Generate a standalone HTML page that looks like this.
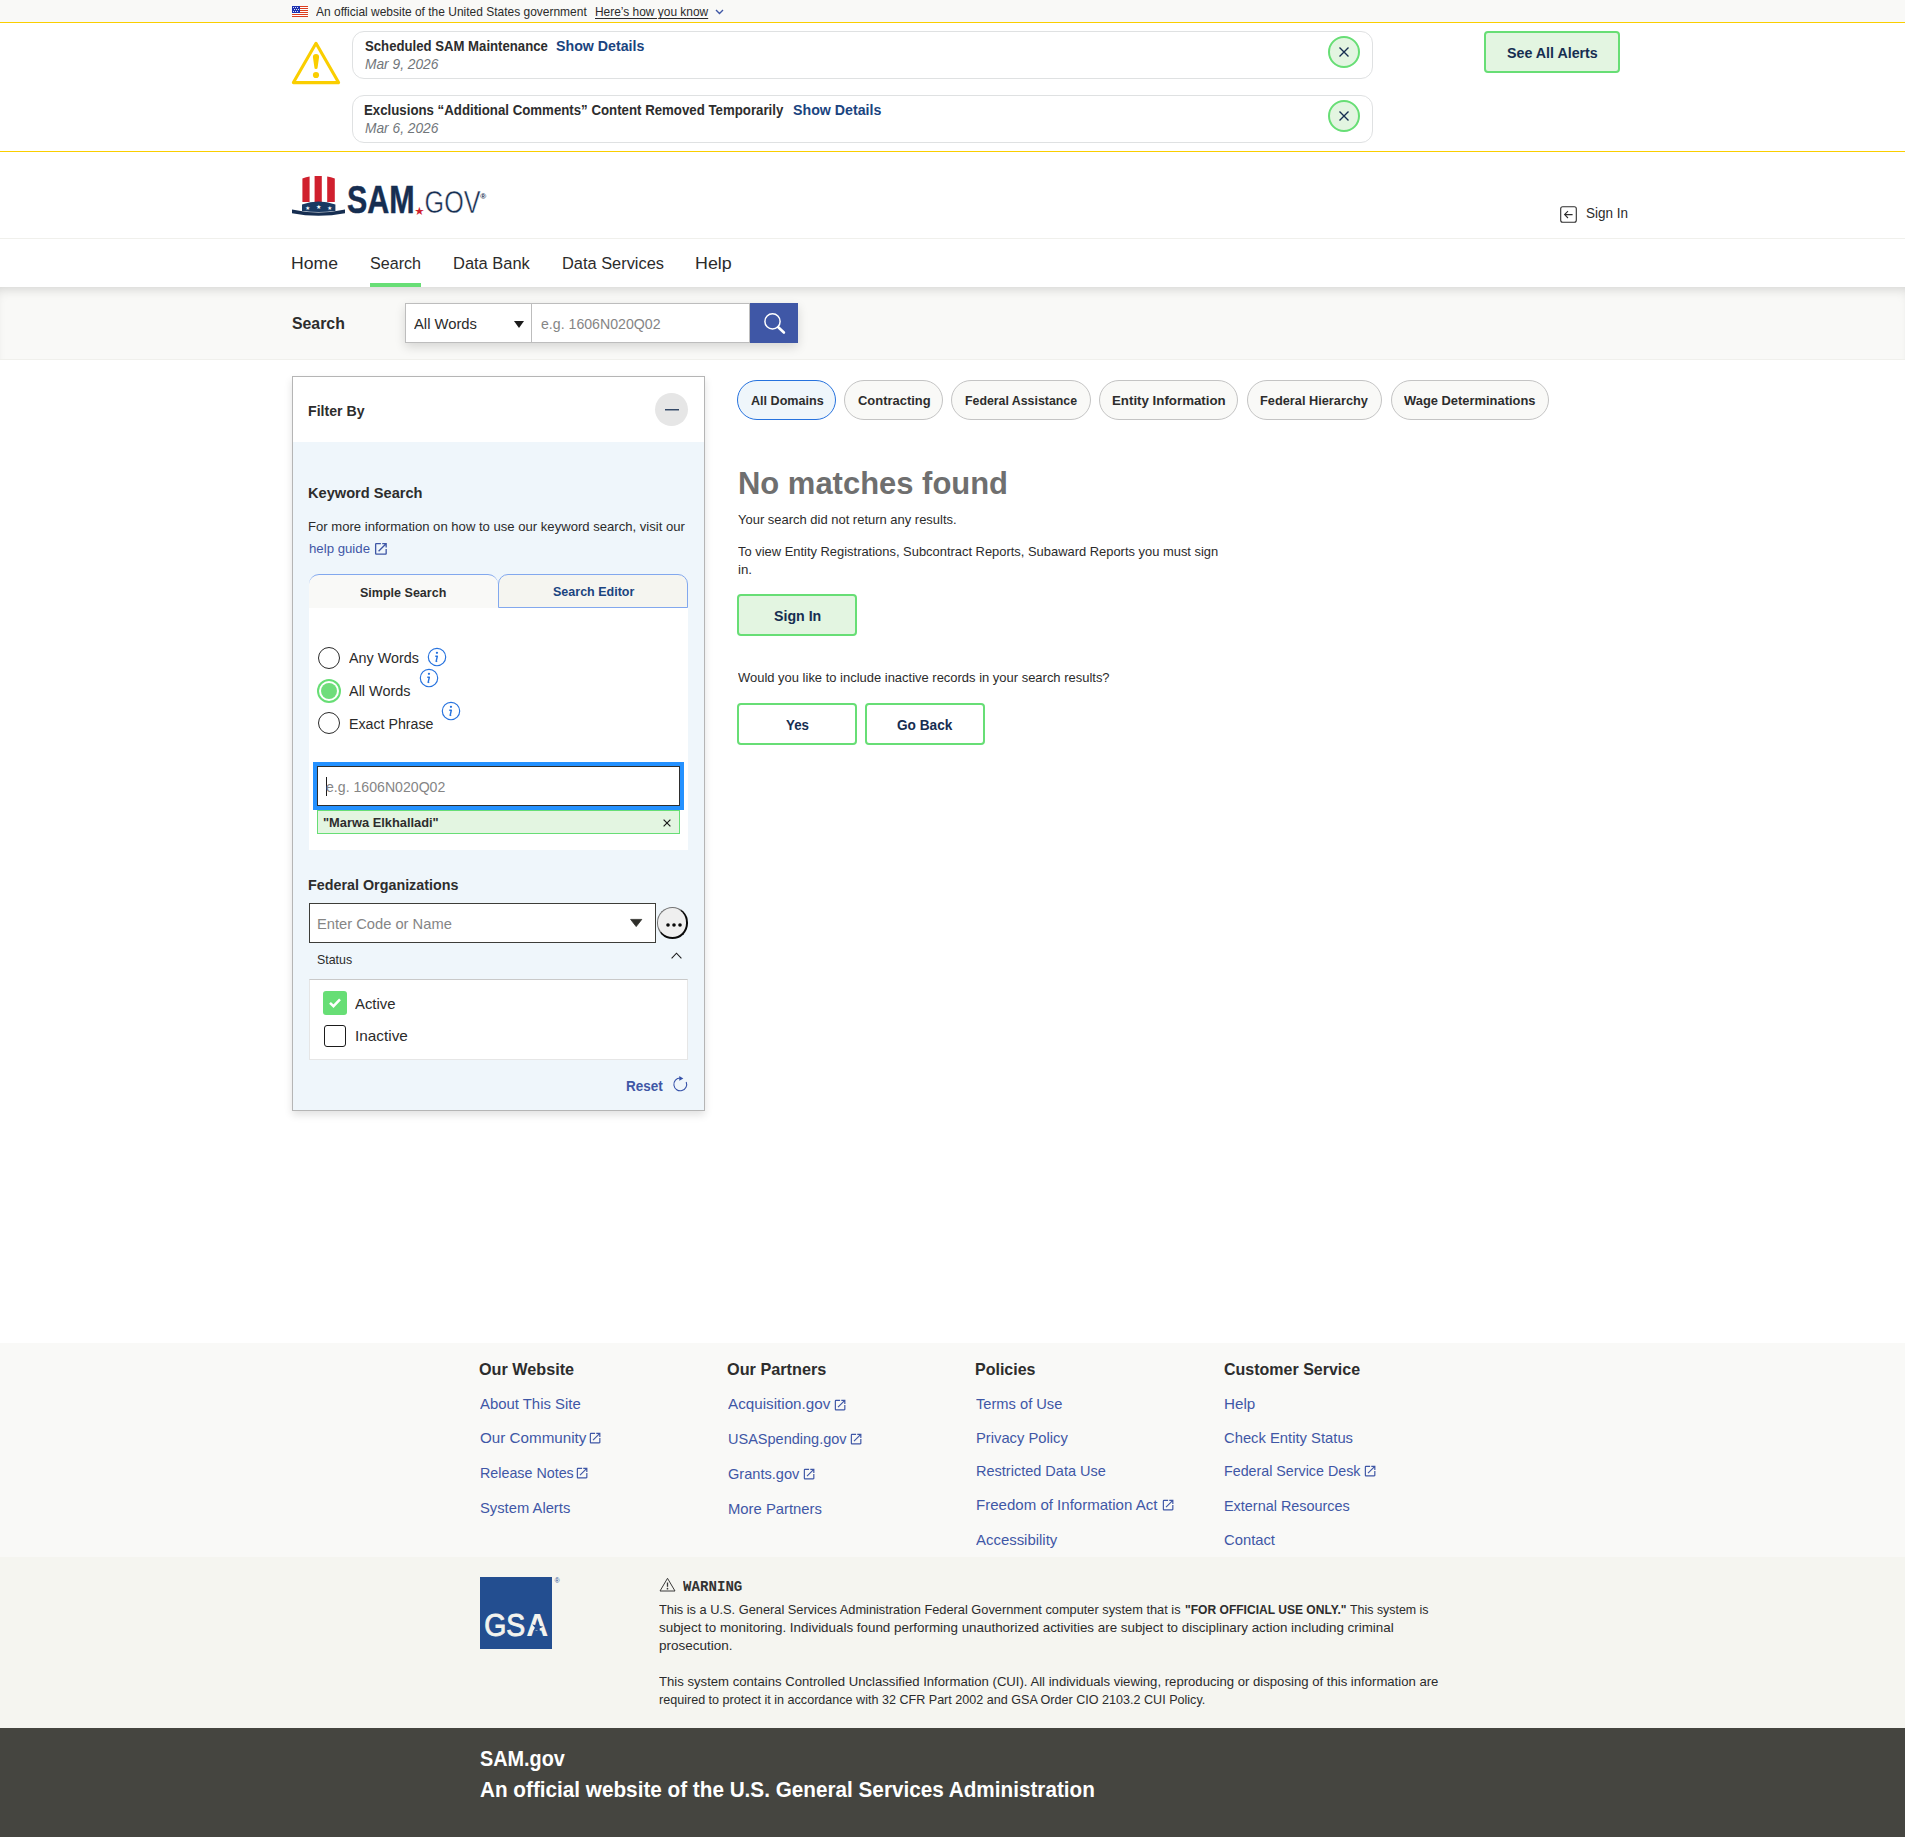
<!DOCTYPE html>
<html lang="en">
<head>
<meta charset="utf-8">
<title>SAM.gov | Search</title>
<style>

*{box-sizing:border-box;margin:0;padding:0}
html,body{width:1905px;height:1837px;overflow:hidden;background:#fff}
body{position:relative;font-family:"Liberation Sans",Arial,sans-serif;color:#2b2b2b}
section,header,nav,main,aside,footer,form{position:absolute;left:0;top:0;width:1905px;height:0;display:block}
.t{position:absolute;transform-origin:0 0;white-space:pre;line-height:1;font-weight:400;text-decoration:none;color:#2b2b2b;font-style:normal;display:block}
.b{position:absolute;display:block}
svg{position:absolute;display:block;overflow:visible}
.bd{font-weight:700;color:#2d2d2d}
.it{font-style:italic}
.lk{color:#3f57a6}
.nv{color:#1a4480}
.dk{color:#162e51}
.gy{color:#71767a}
.ph{color:#858585}
.wh{color:#fff}
.un{text-decoration:underline;text-decoration-thickness:1px;text-underline-offset:2px}
.mono{font-family:"Liberation Mono","DejaVu Sans Mono",monospace}
.gbtn{border:2px solid #67de75;border-radius:4px;background:#e3f5e1}
.gbtn.w{background:#fff}
.alert{border:1px solid #dfe1e2;border-radius:12px;background:#fff}
.xc{border:2px solid #67de75;border-radius:50%;background:#e3f5e1}
.pill{border:1px solid #c4c4c4;border-radius:20px;background:#f9f9f7}
.pill.on{border-color:#2672de;background:#eff6fb}

</style>
</head>
<body>
<section class="banner">
<div class="b" style="left:0.0px;top:0.0px;width:1905.0px;height:22.0px;background:#f9f9f7"></div>
<div class="b" style="left:0.0px;top:22.0px;width:1905.0px;height:1.0px;background:#face00"></div>
<svg style="left:292px;top:6px" width="16" height="11" viewBox="0 0 16 11" shape-rendering="crispEdges"><rect width="16" height="11" fill="#fff"/><rect x="0" y="0" width="16" height="1" fill="#db3e1f"/><rect x="0" y="2" width="16" height="1" fill="#db3e1f"/><rect x="0" y="4" width="16" height="1" fill="#db3e1f"/><rect x="0" y="6" width="16" height="1" fill="#db3e1f"/><rect x="0" y="8" width="16" height="1" fill="#db3e1f"/><rect x="0" y="10" width="16" height="1" fill="#db3e1f"/><rect width="8" height="7" fill="#1e33b1"/><rect x="1.0" y="1.0" width="1" height="1" fill="#fff" opacity=".85"/><rect x="3.0" y="1.0" width="1" height="1" fill="#fff" opacity=".85"/><rect x="5.0" y="1.0" width="1" height="1" fill="#fff" opacity=".85"/><rect x="2.0" y="3.0" width="1" height="1" fill="#fff" opacity=".85"/><rect x="4.0" y="3.0" width="1" height="1" fill="#fff" opacity=".85"/><rect x="6.0" y="3.0" width="1" height="1" fill="#fff" opacity=".85"/><rect x="1.0" y="5.0" width="1" height="1" fill="#fff" opacity=".85"/><rect x="3.0" y="5.0" width="1" height="1" fill="#fff" opacity=".85"/><rect x="5.0" y="5.0" width="1" height="1" fill="#fff" opacity=".85"/></svg>
<span id="t1" class="t" style="left:316.00px;top:6.00px;font-size:12.20px;transform:scaleX(0.9826)">An official website of the United States government</span>
<a id="t2" class="t un" style="left:594.62px;top:6.00px;font-size:12.20px;transform:scaleX(0.9790)">Here’s how you know</a>
<svg style="left:715px;top:9px" width="9" height="6" viewBox="0 0 9 6"><path d="M1 1l3.5 3.5L8 1" fill="none" stroke="#3f57a6" stroke-width="1.4"/></svg>
</section>
<section class="alerts">
<div class="b" style="left:0.0px;top:151.0px;width:1905.0px;height:1.0px;background:#face00"></div>
<svg style="left:290px;top:40px" width="52" height="46" viewBox="290 40 52 46"><path d="M316 43.3L338.600 82.600H293.400Z" fill="none" stroke="#face00" stroke-width="3.100" stroke-linejoin="round"/><path d="M312.900 57a3.100 3.100 0 0 1 6.200 0L317.600 67.400a1.600 1.600 0 0 1-3.200 0Z" fill="#face00"/><circle cx="316" cy="75" r="3.100" fill="#face00"/></svg>
<div class="b alert" style="left:352.0px;top:31.0px;width:1021.0px;height:47.5px;"></div>
<span id="t3" class="t bd" style="left:365.00px;top:38.00px;font-size:15.00px;transform:scaleX(0.8773)">Scheduled SAM Maintenance</span>
<a id="t4" class="t bd nv" style="left:556.30px;top:38.00px;font-size:15.00px;transform:scaleX(0.9461)">Show Details</a>
<span id="t5" class="t it gy" style="left:365.00px;top:56.00px;font-size:15.00px;transform:scaleX(0.9169)">Mar 9, 2026</span>
<div class="b xc" style="left:1328.0px;top:36.0px;width:32.0px;height:32.0px;"><svg style="left:9px;top:9px" width="10" height="10" viewBox="0 0 10 10"><path d="M0.5 0.5l9 9M9.5 0.5l-9 9" stroke="#162e51" stroke-width="1.4" fill="none"/></svg></div>
<div class="b alert" style="left:352.0px;top:95.0px;width:1021.0px;height:47.5px;"></div>
<span id="t6" class="t bd" style="left:364.12px;top:102.00px;font-size:15.00px;transform:scaleX(0.8831)">Exclusions “Additional Comments” Content Removed Temporarily</span>
<a id="t7" class="t bd nv" style="left:792.60px;top:102.00px;font-size:15.00px;transform:scaleX(0.9461)">Show Details</a>
<span id="t8" class="t it gy" style="left:365.00px;top:120.00px;font-size:15.00px;transform:scaleX(0.9169)">Mar 6, 2026</span>
<div class="b xc" style="left:1328.0px;top:100.0px;width:32.0px;height:32.0px;"><svg style="left:9px;top:9px" width="10" height="10" viewBox="0 0 10 10"><path d="M0.5 0.5l9 9M9.5 0.5l-9 9" stroke="#162e51" stroke-width="1.4" fill="none"/></svg></div>
<div class="b gbtn" style="left:1484.0px;top:31.0px;width:136.0px;height:41.5px;"></div>
<a id="t9" class="t bd dk" style="left:1506.50px;top:45.00px;font-size:15.00px;transform:scaleX(0.9495)">See All Alerts</a>
</section>
<header>
<svg style="left:290px;top:174px" width="200" height="44" viewBox="290 174 200 44">
<path d="M302.4 178.6Q306 177.2 309.6 176.6V202H302.4Z" fill="#d0202e"/>
<path d="M314.6 176.1Q318.2 175.7 321.8 176.1V202H314.6Z" fill="#d0202e"/>
<path d="M327.2 176.6Q331 177.2 334.8 178.6V202H327.2Z" fill="#d0202e"/>
<path d="M302 211V204.4Q318.5 198.6 335.4 204.4V211Q318.5 213 302 211Z" fill="#1a3a63"/>
<path d="M292 209.400Q318.500 215.400 345 209.400V213.200Q318.500 218.300 292 213.200Z" fill="#162e51"/>
<text x="307.6" y="209.6" font-size="5.5" fill="#fff" text-anchor="middle" font-family="DejaVu Sans, sans-serif">★</text>
<text x="318.6" y="209.4" font-size="6" fill="#fff" text-anchor="middle" font-family="DejaVu Sans, sans-serif">★</text>
<text x="329.6" y="209.6" font-size="5.5" fill="#fff" text-anchor="middle" font-family="DejaVu Sans, sans-serif">★</text>
<text x="346.900" y="212.500" font-size="39.100" font-weight="700" fill="#162e51" stroke="#162e51" stroke-width="0.500" textLength="67.600" lengthAdjust="spacingAndGlyphs" font-family="Liberation Sans, sans-serif">SAM</text>
<text x="419.500" y="214.900" font-size="11.500" fill="#d0202e" text-anchor="middle" font-family="DejaVu Sans, sans-serif">★</text>
<text x="424.600" y="212.700" font-size="31.400" fill="#162e51" stroke="#fff" stroke-width="0.500" textLength="55.900" lengthAdjust="spacingAndGlyphs" font-family="Liberation Sans, sans-serif">GOV</text>
<text x="480.300" y="199.300" font-size="8" font-weight="700" fill="#162e51" font-family="Liberation Sans, sans-serif">®</text>
</svg>

<svg style="left:1560px;top:206px" width="17" height="17" viewBox="0 0 17 17"><rect x="0.700" y="0.700" width="15.600" height="15.600" rx="2" fill="none" stroke="#2e2e2e" stroke-width="1.100"/><path d="M12.600 8.600H4.800M8 5.200L4.600 8.600L8 12" fill="none" stroke="#2e2e2e" stroke-width="1.100"/></svg>
<a id="t10" class="t" style="left:1586.00px;top:205.00px;font-size:15.30px;transform:scaleX(0.8808)">Sign In</a>
<div class="b" style="left:0.0px;top:238.0px;width:1905.0px;height:1.0px;background:#f0f0ec"></div>
</header>
<nav>
<a id="t11" class="t" style="left:290.96px;top:256.00px;font-size:16.90px;transform:scaleX(1.0421)">Home</a>
<a id="t12" class="t" style="left:370.00px;top:256.00px;font-size:16.90px;transform:scaleX(0.9544)">Search</a>
<a id="t13" class="t" style="left:452.83px;top:256.00px;font-size:16.90px;transform:scaleX(0.9742)">Data Bank</a>
<a id="t14" class="t" style="left:561.83px;top:256.00px;font-size:16.90px;transform:scaleX(0.9702)">Data Services</a>
<a id="t15" class="t" style="left:694.74px;top:256.00px;font-size:16.90px;transform:scaleX(1.0557)">Help</a>
<div class="b" style="left:370.0px;top:283.0px;width:51.0px;height:4.0px;background:#67de75"></div>
</nav>
<form class="searchbar">
<div class="b" style="left:0.0px;top:287.0px;width:1905.0px;height:73.0px;background:#f9f9f7;box-shadow:inset 0 8px 12px -6px rgba(0,0,0,.16);border-bottom:1px solid #f0f0ec"></div>
<label id="t16" class="t bd" style="left:292.00px;top:316.00px;font-size:16.90px;transform:scaleX(0.9372)">Search</label>
<div class="b" style="left:405.0px;top:303.0px;width:393.0px;height:40.0px;box-shadow:0 4px 10px rgba(0,0,0,.14)"></div>
<div class="b" style="left:405.0px;top:303.0px;width:127.0px;height:40.0px;background:#fff;border:1px solid #bdbdbd"></div>
<span id="t17" class="t" style="left:414.00px;top:316.00px;font-size:15.00px;transform:scaleX(0.9857)">All Words</span>
<svg style="left:514px;top:321px" width="10" height="7" viewBox="0 0 10 7"><path d="M0 0h10L5 7z" fill="#1b1b1b"/></svg>
<div class="b" style="left:531.0px;top:303.0px;width:219.0px;height:40.0px;background:#fff;border:1px solid #bdbdbd"></div>
<span id="t18" class="t ph" style="left:540.50px;top:316.00px;font-size:15.00px;transform:scaleX(0.9428)">e.g. 1606N020Q02</span>
<div class="b" style="left:750.0px;top:303.0px;width:48.0px;height:40.0px;background:#3f57a6"><svg style="left:12px;top:8px" width="24" height="24" viewBox="0 0 24 24"><circle cx="10.5" cy="10.4" r="7.6" fill="none" stroke="#fff" stroke-width="1.5"/><path d="M16.3 16.3l5.6 5.2" stroke="#fff" stroke-width="2.6" stroke-linecap="round"/></svg></div>
</form>
<main>
<aside>
<div class="b" style="left:292.0px;top:376.0px;width:413.0px;height:735.0px;background:#eff6fb;border:1px solid #b5b5b5;box-shadow:0 4px 8px rgba(0,0,0,.12)"></div>
<div class="b" style="left:293.0px;top:377.0px;width:411.0px;height:65.0px;background:#fff"></div>
<h2 id="t19" class="t bd" style="left:308.36px;top:403.00px;font-size:15.00px;transform:scaleX(0.9418)">Filter By</h2>
<div class="b" style="left:655.0px;top:393.0px;width:33.0px;height:33.0px;background:#e6e6e6;border-radius:50%"><svg style="left:9.5px;top:15.5px" width="14" height="2" viewBox="0 0 14 2"><rect y="0.150" width="14" height="1.250" fill="#162e51"/></svg></div>
<h3 id="t20" class="t bd" style="left:308.33px;top:485.00px;font-size:15.00px;transform:scaleX(0.9744)">Keyword Search</h3>
<p id="t21" class="t" style="left:308.30px;top:520.00px;font-size:13.10px;transform:scaleX(0.9997)">For more information on how to use our keyword search, visit our</p>
<a id="t22" class="t lk" style="left:309.30px;top:542.00px;font-size:13.10px;transform:scaleX(1.0092)">help guide</a>
<svg style="left:373.0px;top:541.1px" width="15.8" height="15.8" viewBox="0 0 24 24"><path d="M19 19H5V5h7V3H5a2 2 0 0 0-2 2v14a2 2 0 0 0 2 2h14c1.100 0 2-.9 2-2v-7h-2v7zM14 3v2h3.590l-9.830 9.830 1.410 1.410L19 6.410V10h2V3h-7z" fill="#3f57a6"/></svg>
<div class="b" style="left:498.0px;top:574.0px;width:190.0px;height:34.0px;background:#f5f5f0;border:1px solid #82a8ee;border-radius:10px 10px 0 0"></div>
<div class="b" style="left:309.0px;top:574.0px;width:189.0px;height:34.0px;background:#f9f9f7;border-top:1px solid #82a8ee;border-radius:10px 10px 0 0"></div>
<a id="t23" class="t bd" style="left:360.00px;top:586.00px;font-size:13.10px;transform:scaleX(0.9563)">Simple Search</a>
<a id="t24" class="t bd nv" style="left:552.50px;top:585.00px;font-size:13.10px;transform:scaleX(0.9560)">Search Editor</a>
<div class="b" style="left:309.0px;top:608.0px;width:379.0px;height:242.0px;background:#fff"></div>
<div class="b" style="left:318.0px;top:647.0px;width:22.0px;height:22.0px;border-radius:50%;border:1.300px solid #2b2b2b;background:#fff"></div>
<label id="t25" class="t" style="left:349.00px;top:650.00px;font-size:15.30px;transform:scaleX(0.9375)">Any Words</label>
<svg style="left:426.5px;top:646.7px" width="20" height="20" viewBox="0 0 20 20"><circle cx="10" cy="10" r="8.700" fill="none" stroke="#2672de" stroke-width="1.150"/><circle cx="9.950" cy="5.800" r="1.150" fill="#2672de"/><path d="M8.300 9.200h2.050l-1.200 5.200 1.100-0.300" fill="none" stroke="#2672de" stroke-width="1.450" stroke-linejoin="round"/></svg>
<div class="b" style="left:321.0px;top:683.0px;width:16.0px;height:16.0px;border-radius:50%;background:#6fdd7b;box-shadow:0 0 0 2px #fff,0 0 0 4px #67de75"></div>
<label id="t26" class="t" style="left:349.00px;top:683.00px;font-size:15.30px;transform:scaleX(0.9447)">All Words</label>
<svg style="left:418.5px;top:667.5px" width="20" height="20" viewBox="0 0 20 20"><circle cx="10" cy="10" r="8.700" fill="none" stroke="#2672de" stroke-width="1.150"/><circle cx="9.950" cy="5.800" r="1.150" fill="#2672de"/><path d="M8.300 9.200h2.050l-1.200 5.200 1.100-0.300" fill="none" stroke="#2672de" stroke-width="1.450" stroke-linejoin="round"/></svg>
<div class="b" style="left:318.0px;top:712.0px;width:22.0px;height:22.0px;border-radius:50%;border:1.300px solid #2b2b2b;background:#fff"></div>
<label id="t27" class="t" style="left:349.00px;top:716.00px;font-size:15.30px;transform:scaleX(0.9285)">Exact Phrase</label>
<svg style="left:440.5px;top:700.7px" width="20" height="20" viewBox="0 0 20 20"><circle cx="10" cy="10" r="8.700" fill="none" stroke="#2672de" stroke-width="1.150"/><circle cx="9.950" cy="5.800" r="1.150" fill="#2672de"/><path d="M8.300 9.200h2.050l-1.200 5.200 1.100-0.300" fill="none" stroke="#2672de" stroke-width="1.450" stroke-linejoin="round"/></svg>
<div class="b" style="left:313.0px;top:762.0px;width:370.7px;height:48.0px;background:#2491ff"></div>
<div class="b" style="left:317.0px;top:766.0px;width:363.0px;height:40.0px;background:#fff;border:1px solid #2e2e2e"></div>
<div class="b" style="left:326.0px;top:777.0px;width:1.0px;height:19.0px;background:#1b1b1b"></div>
<span id="t28" class="t ph" style="left:326.40px;top:779.00px;font-size:15.00px;transform:scaleX(0.9413)">e.g. 1606N020Q02</span>
<div class="b" style="left:317.0px;top:810.3px;width:363.0px;height:23.3px;background:#e3f5e1;border:1px solid #67de75"></div>
<span id="t29" class="t bd" style="left:323.40px;top:816.00px;font-size:13.10px;transform:scaleX(0.9811)">"Marwa Elkhalladi"</span>
<svg style="left:663px;top:818.500px" width="8" height="8" viewBox="0 0 8 8"><path d="M0.6 0.600l6.800 6.800M7.400 0.600l-6.800 6.800" stroke="#1b1b1b" stroke-width="1.200" fill="none"/></svg>
<h3 id="t30" class="t bd" style="left:308.34px;top:877.00px;font-size:15.00px;transform:scaleX(0.9552)">Federal Organizations</h3>
<div class="b" style="left:309.0px;top:903.0px;width:347.0px;height:40.0px;background:#fff;border:1px solid #3d3d38"></div>
<span id="t31" class="t ph" style="left:317.12px;top:916.00px;font-size:15.00px;transform:scaleX(0.9800)">Enter Code or Name</span>
<svg style="left:629.800px;top:919px" width="12.400" height="8" viewBox="0 0 12.400 8"><path d="M0.600 0.400h11.200L6.200 7.600z" fill="#2e2e2a" stroke="#2e2e2a" stroke-width="0.800" stroke-linejoin="round"/></svg>
<div class="b" style="left:656.7px;top:907.2px;width:31.2px;height:31.5px;border-radius:50%;border-style:solid;border-width:1.700px 2.600px 2.600px 1.700px;border-color:#747474 #0a0a0a #0a0a0a #747474;background:#efefef"><svg style="left:8.100px;top:14.400px" width="16" height="4" viewBox="0 0 16 4"><circle cx="2" cy="2" r="1.800" fill="#0a0a0a"/><circle cx="8" cy="2" r="1.800" fill="#0a0a0a"/><circle cx="14" cy="2" r="1.800" fill="#0a0a0a"/></svg></div>
<span id="t32" class="t" style="left:317.40px;top:953.00px;font-size:13.10px;transform:scaleX(0.9475)">Status</span>
<svg style="left:671px;top:952px" width="11" height="7" viewBox="0 0 11 7"><path d="M0.600 6.300L5.500 1.200l4.900 5.100" fill="none" stroke="#1b1b1b" stroke-width="1.100"/></svg>
<div class="b" style="left:309.0px;top:979.0px;width:379.0px;height:80.5px;background:#fff;border:1px solid #e6e6e6;border-top-color:#c9c9c9"></div>
<div class="b" style="left:323.0px;top:991.0px;width:24.0px;height:24.0px;background:#67de75;border-radius:3px"><svg style="left:6px;top:7px" width="12" height="10" viewBox="0 0 12 10"><path d="M1 4.800l3.500 3.400L11 1.400" fill="none" stroke="#fff" stroke-width="2.500"/></svg></div>
<label id="t33" class="t" style="left:354.80px;top:996.00px;font-size:15.00px;transform:scaleX(0.9925)">Active</label>
<div class="b" style="left:324.0px;top:1025.0px;width:22.0px;height:22.0px;background:#fff;border:1.400px solid #1b1b1b;border-radius:3px"></div>
<label id="t34" class="t" style="left:354.80px;top:1028.00px;font-size:15.00px;transform:scaleX(1.0224)">Inactive</label>
<a id="t35" class="t lk" style="left:625.60px;top:1079.00px;font-size:14.20px;transform:scaleX(0.9507);font-weight:700">Reset</a>
<svg style="left:670px;top:1074px" width="20" height="20" viewBox="670 1074 20 20"><path d="M686.200 1082A6.400 6.400 0 1 1 680.200 1078" fill="none" stroke="#3450a8" stroke-width="1.100"/><path d="M679.300 1076L683.300 1078.400 679.300 1080.800Z" fill="#3450a8"/></svg>
</aside>
<section class="results">
<div class="b pill on" style="left:737.0px;top:380.3px;width:98.5px;height:39.5px;"></div>
<a id="t36" class="t bd" style="left:750.50px;top:394.00px;font-size:13.10px;transform:scaleX(0.9617)">All Domains</a>
<div class="b pill" style="left:844.2px;top:380.3px;width:98.4px;height:39.5px;"></div>
<a id="t37" class="t bd" style="left:857.60px;top:394.00px;font-size:13.10px;transform:scaleX(0.9882)">Contracting</a>
<div class="b pill" style="left:951.4px;top:380.3px;width:139.6px;height:39.5px;"></div>
<a id="t38" class="t bd" style="left:964.80px;top:394.00px;font-size:13.10px;transform:scaleX(0.9422)">Federal Assistance</a>
<div class="b pill" style="left:1099.2px;top:380.3px;width:139.0px;height:39.5px;"></div>
<a id="t39" class="t bd" style="left:1112.10px;top:394.00px;font-size:13.10px;transform:scaleX(1.0150)">Entity Information</a>
<div class="b pill" style="left:1247.0px;top:380.3px;width:135.4px;height:39.5px;"></div>
<a id="t40" class="t bd" style="left:1260.40px;top:394.00px;font-size:13.10px;transform:scaleX(0.9754)">Federal Hierarchy</a>
<div class="b pill" style="left:1391.1px;top:380.3px;width:157.5px;height:39.5px;"></div>
<a id="t41" class="t bd" style="left:1404.00px;top:394.00px;font-size:13.10px;transform:scaleX(0.9857)">Wage Determinations</a>
<h1 id="t42" class="t bd" style="left:738.18px;top:468.00px;font-size:30.60px;transform:scaleX(1.0119);color:#6f6f6f">No matches found</h1>
<p id="t43" class="t" style="left:737.60px;top:513.00px;font-size:13.10px;transform:scaleX(0.9903)">Your search did not return any results.</p>
<p id="t44" class="t" style="left:737.60px;top:545.00px;font-size:13.10px;transform:scaleX(0.9863)">To view Entity Registrations, Subcontract Reports, Subaward Reports you must sign</p>
<p id="t45" class="t" style="left:737.60px;top:563.00px;font-size:13.10px;transform:scaleX(1.0158)">in.</p>
<div class="b gbtn" style="left:737.0px;top:594.0px;width:120.0px;height:42.0px;"></div>
<a id="t46" class="t bd dk" style="left:773.60px;top:608.00px;font-size:15.00px;transform:scaleX(0.9452)">Sign In</a>
<p id="t47" class="t" style="left:737.60px;top:671.00px;font-size:13.10px;transform:scaleX(0.9901)">Would you like to include inactive records in your search results?</p>
<div class="b gbtn w" style="left:737.0px;top:703.0px;width:120.0px;height:41.5px;"></div>
<a id="t48" class="t bd dk" style="left:786.00px;top:717.00px;font-size:15.00px;transform:scaleX(0.8895)">Yes</a>
<div class="b gbtn w" style="left:865.0px;top:703.0px;width:120.0px;height:41.5px;"></div>
<a id="t49" class="t bd dk" style="left:897.40px;top:717.00px;font-size:15.00px;transform:scaleX(0.9087)">Go Back</a>
</section>
</main>
<footer>
<div class="b" style="left:0.0px;top:1343.0px;width:1905.0px;height:214.0px;background:#f9f9f7"></div>
<div class="b" style="left:0.0px;top:1557.0px;width:1905.0px;height:171.0px;background:#f5f5f0"></div>
<div class="b" style="left:0.0px;top:1728.0px;width:1905.0px;height:109.0px;background:#454540"></div>
<h4 id="t50" class="t bd" style="left:479.20px;top:1362.00px;font-size:16.90px;transform:scaleX(0.9587)">Our Website</h4>
<h4 id="t51" class="t bd" style="left:727.40px;top:1362.00px;font-size:16.90px;transform:scaleX(0.9624)">Our Partners</h4>
<h4 id="t52" class="t bd" style="left:975.20px;top:1362.00px;font-size:16.90px;transform:scaleX(0.9472)">Policies</h4>
<h4 id="t53" class="t bd" style="left:1223.50px;top:1362.00px;font-size:16.90px;transform:scaleX(0.9473)">Customer Service</h4>
<a id="t54" class="t lk" style="left:479.60px;top:1396.00px;font-size:15.00px;transform:scaleX(0.9923)">About This Site</a>
<a id="t55" class="t lk" style="left:479.60px;top:1430.00px;font-size:15.00px;transform:scaleX(1.0131)">Our Community</a>
<svg style="left:588.4px;top:1431.1px" width="14.2" height="14.2" viewBox="0 0 24 24"><path d="M19 19H5V5h7V3H5a2 2 0 0 0-2 2v14a2 2 0 0 0 2 2h14c1.100 0 2-.9 2-2v-7h-2v7zM14 3v2h3.590l-9.830 9.830 1.410 1.410L19 6.410V10h2V3h-7z" fill="#3f57a6"/></svg>
<a id="t56" class="t lk" style="left:479.60px;top:1465.00px;font-size:15.00px;transform:scaleX(0.9531)">Release Notes</a>
<svg style="left:574.8px;top:1466.2px" width="14.2" height="14.2" viewBox="0 0 24 24"><path d="M19 19H5V5h7V3H5a2 2 0 0 0-2 2v14a2 2 0 0 0 2 2h14c1.100 0 2-.9 2-2v-7h-2v7zM14 3v2h3.590l-9.830 9.830 1.410 1.410L19 6.410V10h2V3h-7z" fill="#3f57a6"/></svg>
<a id="t57" class="t lk" style="left:479.60px;top:1500.00px;font-size:15.00px;transform:scaleX(0.9846)">System Alerts</a>
<a id="t58" class="t lk" style="left:727.80px;top:1396.00px;font-size:15.00px;transform:scaleX(1.0139)">Acquisition.gov</a>
<svg style="left:832.5px;top:1397.5px" width="14.2" height="14.2" viewBox="0 0 24 24"><path d="M19 19H5V5h7V3H5a2 2 0 0 0-2 2v14a2 2 0 0 0 2 2h14c1.100 0 2-.9 2-2v-7h-2v7zM14 3v2h3.590l-9.830 9.830 1.410 1.410L19 6.410V10h2V3h-7z" fill="#3f57a6"/></svg>
<a id="t59" class="t lk" style="left:727.80px;top:1431.00px;font-size:15.00px;transform:scaleX(0.9676)">USASpending.gov</a>
<svg style="left:848.8px;top:1432.1px" width="14.2" height="14.2" viewBox="0 0 24 24"><path d="M19 19H5V5h7V3H5a2 2 0 0 0-2 2v14a2 2 0 0 0 2 2h14c1.100 0 2-.9 2-2v-7h-2v7zM14 3v2h3.590l-9.830 9.830 1.410 1.410L19 6.410V10h2V3h-7z" fill="#3f57a6"/></svg>
<a id="t60" class="t lk" style="left:727.80px;top:1466.00px;font-size:15.00px;transform:scaleX(0.9720)">Grants.gov</a>
<svg style="left:801.5px;top:1466.8px" width="14.2" height="14.2" viewBox="0 0 24 24"><path d="M19 19H5V5h7V3H5a2 2 0 0 0-2 2v14a2 2 0 0 0 2 2h14c1.100 0 2-.9 2-2v-7h-2v7zM14 3v2h3.590l-9.830 9.830 1.410 1.410L19 6.410V10h2V3h-7z" fill="#3f57a6"/></svg>
<a id="t61" class="t lk" style="left:727.80px;top:1501.00px;font-size:15.00px;transform:scaleX(0.9880)">More Partners</a>
<a id="t62" class="t lk" style="left:975.60px;top:1396.00px;font-size:15.00px;transform:scaleX(0.9772)">Terms of Use</a>
<a id="t63" class="t lk" style="left:975.60px;top:1430.00px;font-size:15.00px;transform:scaleX(0.9834)">Privacy Policy</a>
<a id="t64" class="t lk" style="left:975.60px;top:1463.00px;font-size:15.00px;transform:scaleX(0.9673)">Restricted Data Use</a>
<a id="t65" class="t lk" style="left:975.60px;top:1497.00px;font-size:15.00px;transform:scaleX(1.0029)">Freedom of Information Act</a>
<svg style="left:1160.6px;top:1498.2px" width="14.2" height="14.2" viewBox="0 0 24 24"><path d="M19 19H5V5h7V3H5a2 2 0 0 0-2 2v14a2 2 0 0 0 2 2h14c1.100 0 2-.9 2-2v-7h-2v7zM14 3v2h3.590l-9.830 9.830 1.410 1.410L19 6.410V10h2V3h-7z" fill="#3f57a6"/></svg>
<a id="t66" class="t lk" style="left:975.60px;top:1532.00px;font-size:15.00px;transform:scaleX(0.9953)">Accessibility</a>
<a id="t67" class="t lk" style="left:1223.90px;top:1396.00px;font-size:15.00px;transform:scaleX(1.0129)">Help</a>
<a id="t68" class="t lk" style="left:1223.90px;top:1430.00px;font-size:15.00px;transform:scaleX(0.9855)">Check Entity Status</a>
<a id="t69" class="t lk" style="left:1223.90px;top:1463.00px;font-size:15.00px;transform:scaleX(0.9514)">Federal Service Desk</a>
<svg style="left:1362.7px;top:1464.2px" width="14.2" height="14.2" viewBox="0 0 24 24"><path d="M19 19H5V5h7V3H5a2 2 0 0 0-2 2v14a2 2 0 0 0 2 2h14c1.100 0 2-.9 2-2v-7h-2v7zM14 3v2h3.590l-9.830 9.830 1.410 1.410L19 6.410V10h2V3h-7z" fill="#3f57a6"/></svg>
<a id="t70" class="t lk" style="left:1223.90px;top:1498.00px;font-size:15.00px;transform:scaleX(0.9610)">External Resources</a>
<a id="t71" class="t lk" style="left:1223.90px;top:1532.00px;font-size:15.00px;transform:scaleX(0.9862)">Contact</a>
<div class="b" style="left:480.0px;top:1577.0px;width:72.0px;height:72.0px;background:#234e90"></div>
<svg style="left:480px;top:1577px" width="82" height="72" viewBox="480 1577 82 72"><text x="484.300" y="1636.400" font-size="31.800" fill="#f3f3ee" stroke="#f3f3ee" stroke-width="0.900" font-family="Liberation Sans, sans-serif" textLength="41" lengthAdjust="spacingAndGlyphs">GS</text><text x="526.300" y="1636.400" font-size="31.800" font-weight="700" fill="#f3f3ee" font-family="Liberation Sans, sans-serif" textLength="22" lengthAdjust="spacingAndGlyphs">A</text><path d="M538.400 1621.600l0.800 4.100 4 1-3.600 1.900 0.300 4.200-3-2.900-3.800 1.600 1.800-3.700-2.700-3.200 4.200 0.600z" fill="#234e90"/><text x="554.600" y="1582.600" font-size="6.800" font-style="italic" fill="#234e90" font-family="Liberation Sans, sans-serif">®</text></svg>
<svg style="left:658.700px;top:1577.300px" width="17" height="15" viewBox="0 0 17 15"><path d="M8.500 1.300L16 14H1Z" fill="none" stroke="#3a3a3a" stroke-width="1" stroke-linejoin="round"/><path d="M8.500 5.500v4.300" stroke="#3a3a3a" stroke-width="1.300"/><circle cx="8.500" cy="11.700" r="0.850" fill="#3a3a3a"/></svg>
<span id="t72" class="t bd mono" style="left:683.40px;top:1580.00px;font-size:14.90px;transform:scaleX(0.9487);color:#333">WARNING</span>
<p id="t73" class="t" style="left:659.10px;top:1603.00px;font-size:13.10px;transform:scaleX(0.9778)">This is a U.S. General Services Administration Federal Government computer system that is</p>
<strong id="t74" class="t bd" style="left:1184.80px;top:1603.00px;font-size:13.10px;transform:scaleX(0.9207)">"FOR OFFICIAL USE ONLY."</strong>
<p id="t75" class="t" style="left:1349.50px;top:1603.00px;font-size:13.10px;transform:scaleX(0.9474)">This system is</p>
<p id="t76" class="t" style="left:659.10px;top:1621.00px;font-size:13.10px;transform:scaleX(1.0217)">subject to monitoring. Individuals found performing unauthorized activities are subject to disciplinary action including criminal</p>
<p id="t77" class="t" style="left:659.10px;top:1639.00px;font-size:13.10px;transform:scaleX(1.0298)">prosecution.</p>
<p id="t78" class="t" style="left:659.10px;top:1675.00px;font-size:13.10px;transform:scaleX(1.0028)">This system contains Controlled Unclassified Information (CUI). All individuals viewing, reproducing or disposing of this information are</p>
<p id="t79" class="t" style="left:659.10px;top:1693.00px;font-size:13.10px;transform:scaleX(0.9602)">required to protect it in accordance with 32 CFR Part 2002 and GSA Order CIO 2103.2 CUI Policy.</p>
<span id="t80" class="t bd wh" style="left:480.00px;top:1749.00px;font-size:21.30px;transform:scaleX(0.9314)">SAM.gov</span>
<span id="t81" class="t bd wh" style="left:480.00px;top:1780.00px;font-size:21.30px;transform:scaleX(0.9723)">An official website of the U.S. General Services Administration</span>
</footer>
</body>
</html>
